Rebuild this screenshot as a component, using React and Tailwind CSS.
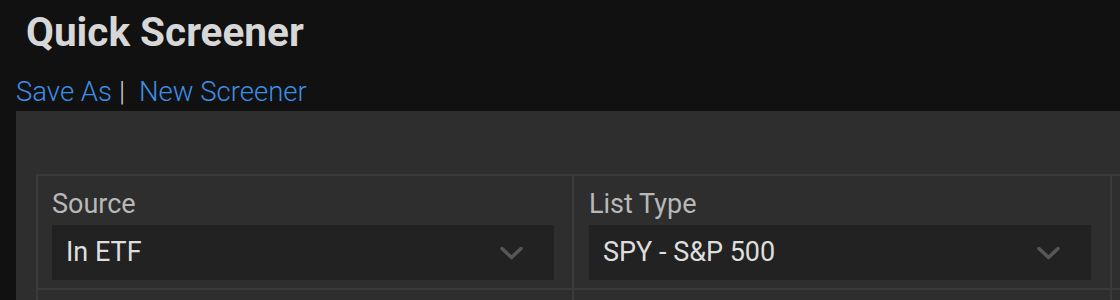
import { ChevronDown } from 'lucide-react'

function SelectBox({ value }) {
  return (
    <div className="w-[502px] h-[55px] bg-[#222222] flex items-center justify-between pl-[14px] pr-[30px]">
      <span className="text-[27px] leading-none text-[#dedede]">{value}</span>
      <svg width="25" height="16" viewBox="0 0 25 16" fill="none">
        <path d="M3 3.5l9.5 9 9.5-9" stroke="#575757" strokeWidth="3.5" strokeLinecap="round" strokeLinejoin="round" />
      </svg>
    </div>
  )
}

function Field({ label, value, first }) {
  return (
    <div className={`border-l-2 border-t-2 border-b-2 border-[#3a3a3a] pt-[15px] pb-[8px] ${first ? 'pl-[14px]' : 'pl-[15px]'}`}>
      <div className="text-[27px] leading-none text-[#b8b8b8] mb-[7px]">{label}</div>
      <SelectBox value={value} />
    </div>
  )
}

export default function App() {
  return (
    <div className="w-[1120px] h-[300px] overflow-hidden bg-[#111111] font-['Roboto',sans-serif]">
      <h1 className="pl-[26px] pt-[12px] text-[40.5px] leading-none font-bold text-[#d7d7d7]">Quick Screener</h1>
      <div className="pl-[16px] mt-[25px] text-[27.5px] leading-none font-light flex items-center">
        <span className="text-[#3d8ee6]">Save As</span>
        <span className="text-[#cfcfcf] ml-[7px] mr-[14px]">|</span>
        <span className="text-[#3d8ee6]">New Screener</span>
      </div>
      <div className="ml-[16px] mt-[6px] bg-[#2e2e2e] pt-[63px] pl-[20px] h-[300px]">
        <div className="grid grid-cols-[536px_538px_1fr]">
          <Field label="Source" value="In ETF" first />
          <Field label="List Type" value="SPY - S&P 500" />
          <div className="border-l-2 border-t-2 border-b-2 border-[#3a3a3a]" />
          <div className="border-l-2 border-[#3a3a3a] h-[40px]" />
          <div className="border-l-2 border-[#3a3a3a] h-[40px]" />
          <div className="border-l-2 border-[#3a3a3a] h-[40px]" />
        </div>
      </div>
    </div>
  )
}
